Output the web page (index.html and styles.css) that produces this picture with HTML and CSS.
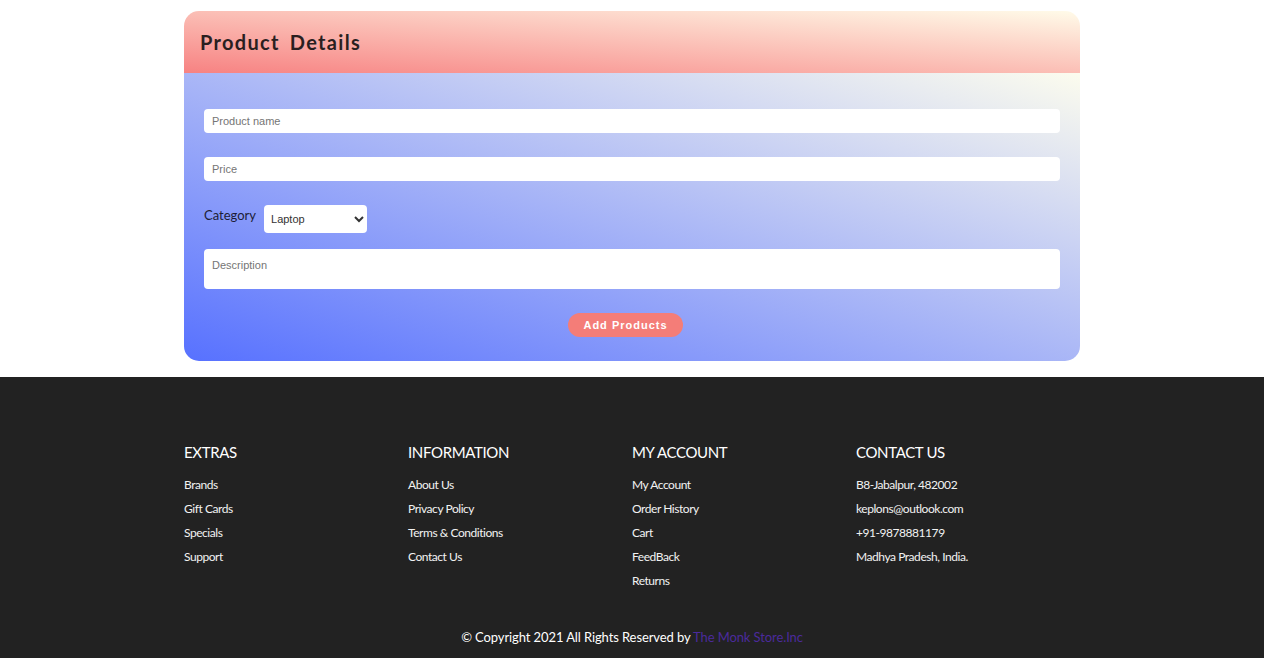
FILE: index.html
```html
<!DOCTYPE html>
<html lang="en">
<head>
<meta charset="utf-8">
<title>Product Details</title>
<link rel="stylesheet" href="styles.css">
</head>
<body>
<main class="page">
  <section class="card">
    <header class="card-head">
      <h1 class="card-title">Product Details</h1>
    </header>
    <form class="card-body">
      <input class="field" type="text" placeholder="Product name">
      <input class="field field-price" type="text" placeholder="Price">
      <div class="cat-row">
        <label class="cat-label" for="cat">Category</label>
        <select class="cat-select" id="cat">
          <option>Laptop</option>
          <option>Mobile</option>
          <option>Accessories</option>
        </select>
      </div>
      <textarea class="desc" placeholder="Description"></textarea>
      <div class="actions">
        <button class="btn" type="button">Add Products</button>
      </div>
    </form>
  </section>
</main>
<footer class="footer">
  <div class="footer-cols">
    <div class="col">
      <h4 class="col-title">EXTRAS</h4>
      <ul class="col-list">
        <li>Brands</li>
        <li>Gift Cards</li>
        <li>Specials</li>
        <li>Support</li>
      </ul>
    </div>
    <div class="col">
      <h4 class="col-title">INFORMATION</h4>
      <ul class="col-list">
        <li>About Us</li>
        <li>Privacy Policy</li>
        <li>Terms &amp; Conditions</li>
        <li>Contact Us</li>
      </ul>
    </div>
    <div class="col">
      <h4 class="col-title">MY ACCOUNT</h4>
      <ul class="col-list">
        <li>My Account</li>
        <li>Order History</li>
        <li>Cart</li>
        <li>FeedBack</li>
        <li>Returns</li>
      </ul>
    </div>
    <div class="col">
      <h4 class="col-title">CONTACT US</h4>
      <ul class="col-list">
        <li>B8-Jabalpur, 482002</li>
        <li>keplons@outlook.com</li>
        <li>+91-9878881179</li>
        <li>Madhya Pradesh, India.</li>
      </ul>
    </div>
  </div>
  <p class="copy">© Copyright 2021 All Rights Reserved by <a class="copy-link" href="#">The Monk Store.Inc</a></p>
</footer>
</body>
</html>
```

FILE: styles.css
```css
* { box-sizing: border-box; }

html, body {
  margin: 0;
  padding: 0;
  background: #ffffff;
  font-family: "Lato", "Liberation Sans", Arial, sans-serif;
}

.page {
  padding: 11px 0 16px;
}

.card {
  width: 896px;
  margin: 0 auto;
  border-radius: 15px;
  overflow: hidden;
}

.card-head {
  height: 62px;
  display: flex;
  align-items: center;
  padding: 0 16px;
  background: linear-gradient(to top right, #f78282, #fffbe9);
}

.card-title {
  margin: 0;
  font-family: "Lato", sans-serif;
  font-weight: 700;
  font-size: 20px;
  letter-spacing: 1.3px;
  word-spacing: 4px;
  color: #2a1f1f;
}

.card-body {
  display: flex;
  flex-direction: column;
  padding: 36px 20px 24px;
  background: linear-gradient(to top right, #5771ff, #fcfcee);
}

.field {
  height: 24px;
  width: 100%;
  border: none;
  border-radius: 4px;
  padding: 0 8px;
  background: #fff;
  font-family: "Liberation Sans", Arial, sans-serif;
  font-size: 11px;
  color: #333;
  outline: none;
}

.field::placeholder, .desc::placeholder {
  color: #757575;
}

.field-price {
  margin-top: 24px;
}

.cat-row {
  margin-top: 24px;
  display: flex;
  align-items: center;
  height: 28px;
}

.cat-label {
  font-family: "Lato", sans-serif;
  font-size: 13px;
  color: #1d1d35;
  margin-right: 8px;
  position: relative;
  top: -4px;
}

.cat-select {
  width: 103px;
  height: 28px;
  border: none;
  border-radius: 4px;
  background: #fff;
  padding: 0 3px;
  font-family: "Liberation Sans", Arial, sans-serif;
  font-size: 11px;
  color: #333;
  outline: none;
}

.desc {
  margin-top: 16px;
  height: 40px;
  width: 100%;
  border: none;
  border-radius: 4px;
  padding: 10px 8px 8px;
  resize: none;
  background: #fff;
  font-family: "Liberation Sans", Arial, sans-serif;
  font-size: 11px;
  outline: none;
}

.actions {
  margin-top: 24px;
  display: flex;
  justify-content: center;
  padding-right: 13px;
}

.btn {
  width: 115px;
  height: 24px;
  border: none;
  border-radius: 12px;
  background: #f47d78;
  color: #fff;
  font-family: "Liberation Sans", Arial, sans-serif;
  font-weight: 700;
  font-size: 11px;
  letter-spacing: 1px;
  padding: 0;
  cursor: pointer;
}

.footer {
  background: #222222;
  padding: 66px 0 14px;
  color: #f2f2f2;
}

.footer-cols {
  width: 896px;
  margin: 0 auto;
  display: grid;
  grid-template-columns: repeat(4, 1fr);
}

.col-title {
  margin: 0 0 12px;
  font-family: "Lato", sans-serif;
  font-weight: 400;
  font-size: 15px;
  line-height: 18px;
  letter-spacing: -0.35px;
  color: #ffffff;
}

.col-list {
  list-style: none;
  margin: 0;
  padding: 0;
}

.col-list li {
  font-size: 12px;
  line-height: 24px;
  letter-spacing: -0.45px;
  color: #f2f2f2;
}

.copy {
  margin: 36px 0 0;
  text-align: center;
  font-size: 13px;
  line-height: 16px;
  letter-spacing: -0.1px;
  color: #ffffff;
}

.copy-link {
  color: #4b2a9c;
  text-decoration: none;
}
```
